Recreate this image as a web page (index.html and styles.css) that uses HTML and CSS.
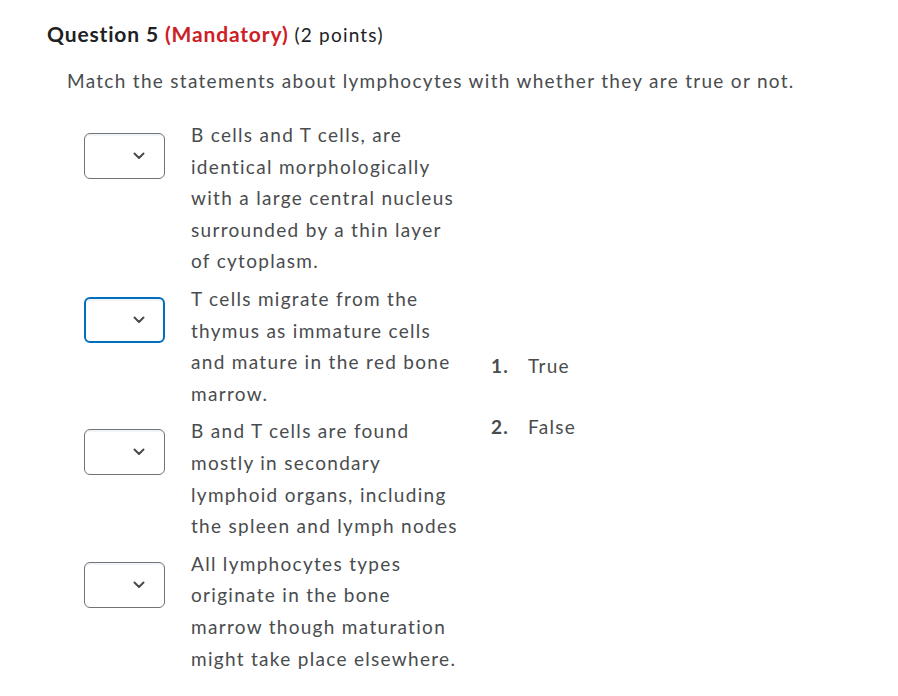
FILE: index.html
```html
<!DOCTYPE html>
<html lang="en">
<head>
<meta charset="utf-8">
<title>Question 5</title>
<link rel="stylesheet" href="styles.css">
</head>
<body>
<div class="question">
  <h2 class="q-title">Question 5 <span class="mand">(Mandatory)</span> <span class="pts">(2 points)</span></h2>
  <div class="q-body">
    <p class="prompt">Match the statements about lymphocytes with whether they are true or not.</p>
    <div class="match">
      <div class="rows">
        <div class="row">
          <div class="select"><svg class="chev" width="12" height="8" viewBox="0 0 12 8"><path d="M1.5 1.5 L6 6 L10.5 1.5" fill="none" stroke="#494c4e" stroke-width="2" stroke-linecap="round" stroke-linejoin="round"/></svg></div>
          <div class="stmt">B cells and T cells, are identical morphologically with a large central nucleus surrounded by a thin layer of cytoplasm.</div>
        </div>
        <div class="row">
          <div class="select focused"><svg class="chev" width="12" height="8" viewBox="0 0 12 8"><path d="M1.5 1.5 L6 6 L10.5 1.5" fill="none" stroke="#494c4e" stroke-width="2" stroke-linecap="round" stroke-linejoin="round"/></svg></div>
          <div class="stmt">T cells migrate from the thymus as immature cells and mature in the red bone marrow.</div>
        </div>
        <div class="row">
          <div class="select"><svg class="chev" width="12" height="8" viewBox="0 0 12 8"><path d="M1.5 1.5 L6 6 L10.5 1.5" fill="none" stroke="#494c4e" stroke-width="2" stroke-linecap="round" stroke-linejoin="round"/></svg></div>
          <div class="stmt">B and T cells are found mostly in secondary lymphoid organs, including the spleen and lymph nodes</div>
        </div>
        <div class="row">
          <div class="select"><svg class="chev" width="12" height="8" viewBox="0 0 12 8"><path d="M1.5 1.5 L6 6 L10.5 1.5" fill="none" stroke="#494c4e" stroke-width="2" stroke-linecap="round" stroke-linejoin="round"/></svg></div>
          <div class="stmt">All lymphocytes types originate in the bone marrow though maturation might take place elsewhere.</div>
        </div>
      </div>
      <ol class="choices">
        <li class="choice"><span class="num">1.</span><span class="label">True</span></li>
        <li class="choice"><span class="num">2.</span><span class="label">False</span></li>
      </ol>
    </div>
  </div>
</div>
</body>
</html>
```

FILE: styles.css
```css
html, body {
  margin: 0;
  padding: 0;
  background: #ffffff;
}

body {
  font-family: Lato, "Open Sans", "Liberation Sans", sans-serif;
  color: #494c4e;
  font-size: 19px;
  letter-spacing: 1.3px;
}

.question {
  padding: 19px 0 0 47px;
}

.q-title {
  margin: 0;
  font-size: 21px;
  line-height: 30px;
  font-weight: 700;
  color: #202122;
  letter-spacing: 0.85px;
}

.mand {
  color: #cd2026;
  font-weight: 700;
}

.pts {
  font-weight: 400;
  font-size: 19px;
  color: #202122;
  letter-spacing: 1.2px;
}

.q-body {
  padding-left: 20px;
  padding-top: 15px;
}

.prompt {
  margin: 0;
  line-height: 32px;
}

.match {
  display: flex;
  align-items: center;
  margin-top: 22px;
}

.rows {
  display: flex;
  flex-direction: column;
  gap: 6px;
  padding-left: 17px;
}

.row {
  display: flex;
  align-items: flex-start;
  gap: 26px;
}

.select {
  box-sizing: border-box;
  width: 81px;
  height: 46px;
  margin-top: 14px;
  border: 1px solid #6e7477;
  border-radius: 6px;
  background: #ffffff;
  box-shadow: inset 0 2px 0 0 rgba(185, 194, 208, 0.2);
  display: flex;
  align-items: center;
  justify-content: flex-end;
  padding-right: 19px;
  flex: none;
}

.select.focused {
  border: 2px solid #006fbf;
  padding-right: 18px;
}

.chev {
  display: block;
}

.stmt {
  width: 272px;
  line-height: 31.6px;
}

.choices {
  list-style: none;
  margin: 0 0 0 28px;
  padding: 0;
  display: flex;
  flex-direction: column;
  gap: 29px;
}

.choice {
  display: flex;
  line-height: 32px;
}

.num {
  width: 37px;
  font-weight: 700;
}
```
